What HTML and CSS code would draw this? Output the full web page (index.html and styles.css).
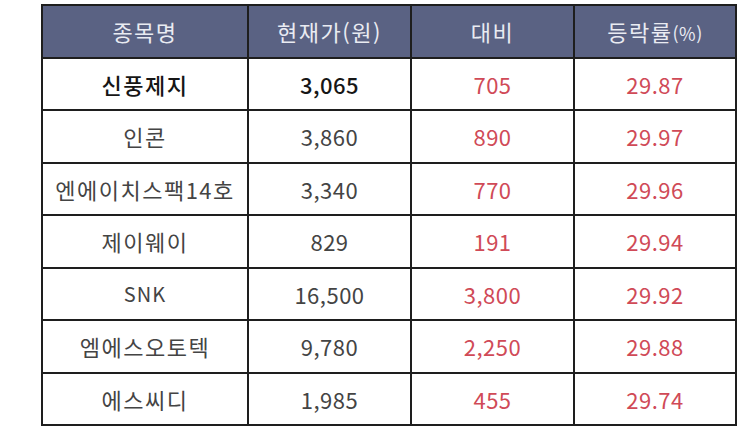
FILE: index.html
```html
<!DOCTYPE html>
<html lang="ko">
<head>
<meta charset="utf-8">
<link rel="stylesheet" href="styles.css">
</head>
<body>
<div class="wrap">
<table class="stock">
  <thead>
    <tr><th class="c1">종목명</th><th class="c2">현재가(원)</th><th class="c3">대비</th><th class="c4">등락률<span class="pct">(%)</span></th></tr>
  </thead>
  <tbody>
    <tr class="first"><td>신풍제지</td><td>3,065</td><td class="up">705</td><td class="up">29.87</td></tr>
    <tr><td>인콘</td><td>3,860</td><td class="up">890</td><td class="up">29.97</td></tr>
    <tr><td>엔에이치스팩14호</td><td>3,340</td><td class="up">770</td><td class="up">29.96</td></tr>
    <tr><td>제이웨이</td><td>829</td><td class="up">191</td><td class="up">29.94</td></tr>
    <tr><td class="latin">SNK</td><td>16,500</td><td class="up">3,800</td><td class="up">29.92</td></tr>
    <tr><td>엠에스오토텍</td><td>9,780</td><td class="up">2,250</td><td class="up">29.88</td></tr>
    <tr><td>에스씨디</td><td>1,985</td><td class="up">455</td><td class="up">29.74</td></tr>
  </tbody>
</table>
</div>
</body>
</html>
```
FILE: styles.css
```css
html, body {
  margin: 0;
  padding: 0;
  background: #ffffff;
}
.wrap {
  padding: 4px 0 0 41px;
}
.stock {
  border-collapse: collapse;
  width: 686px;
  table-layout: fixed;
  font-family: "Noto Sans CJK KR", "Noto Sans", sans-serif;
  font-size: 22px;
  letter-spacing: 0.5px;
}
.stock th, .stock td {
  border: 2px solid #1e1e1e;
  height: 50.5px;
  padding: 0;
  text-align: center;
  vertical-align: middle;
  line-height: 1.2;
}
.stock th {
  background: #5a6283;
  color: #e9ebf2;
  font-weight: 400;
  font-size: 22px;
  letter-spacing: 1.5px;
}
.c1 { width: 204px; }
.c2 { width: 161px; }
.c3 { width: 161px; }
.c4 { width: 160px; }
.pct { font-size: 18px; letter-spacing: 0.5px; }
.stock td {
  color: #444444;
}
.stock td:first-child {
  letter-spacing: 1.5px;
}
.stock tr.first td {
  color: #161616;
  font-weight: 500;
}
.stock td.up, .stock tr.first td.up {
  color: #d04a57;
  font-weight: 400;
}
.stock td.latin {
  font-size: 20px;
  letter-spacing: 1px;
}
```
